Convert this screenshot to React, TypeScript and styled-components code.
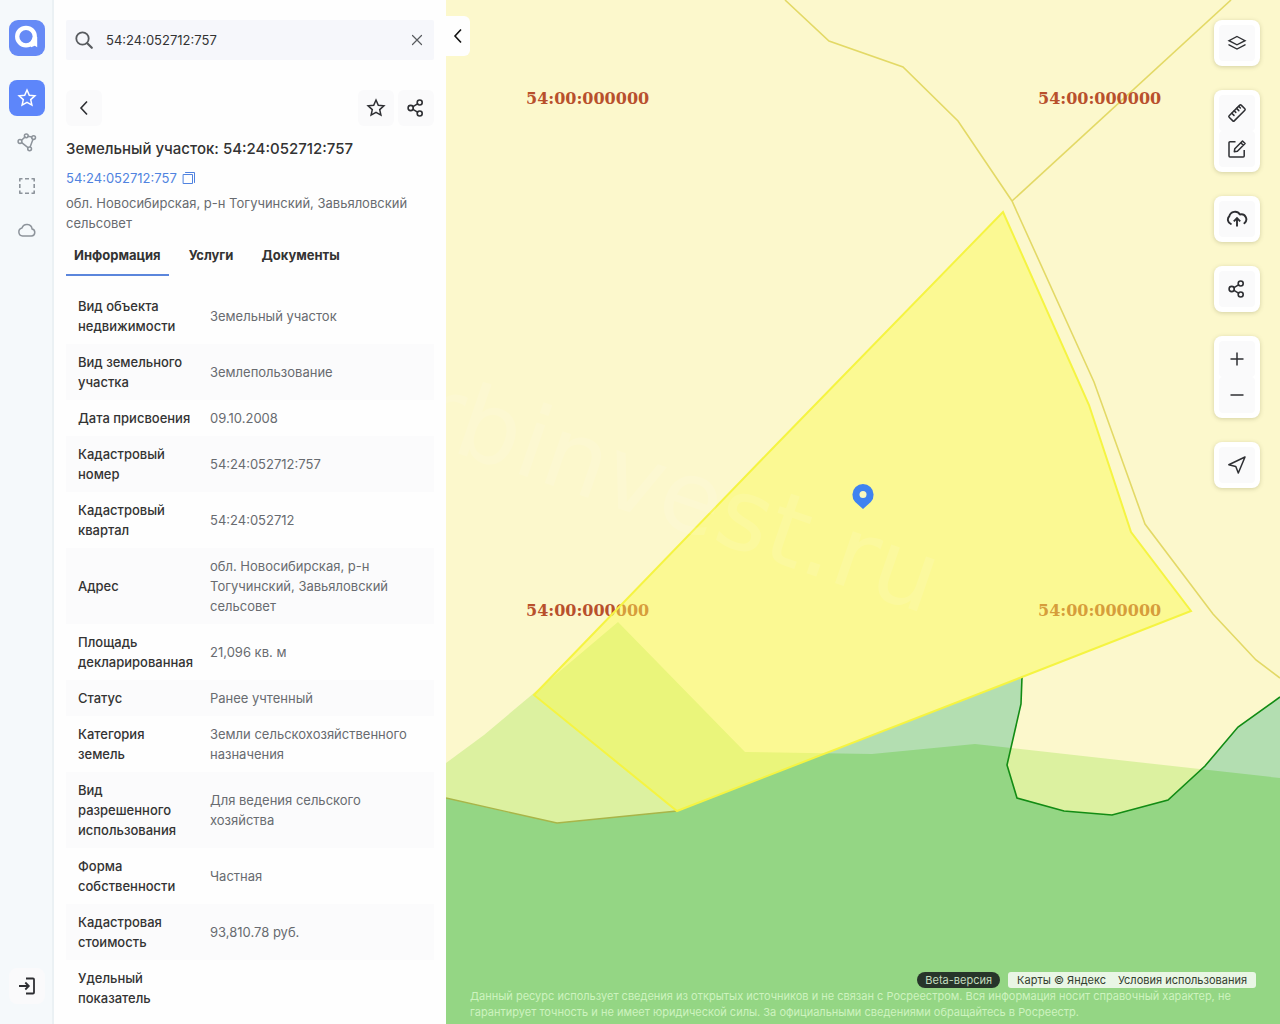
import React, { useState } from 'react';
import styled, { createGlobalStyle } from 'styled-components';

const GlobalStyle = createGlobalStyle`
  * { box-sizing: border-box; }
  body {
    margin: 0;
    background: #fefefe;
    color: #333;
    font: 400 13px/20px Inter, "Noto Sans", sans-serif;
  }
  button, input { font: inherit; color: inherit; }
`;

const Layout = styled.div`
  display: grid;
  grid-template-columns: 54px 392px minmax(0, 1fr);
  height: 100vh;
  overflow: hidden;
`;

/* ---------- Navigation rail ---------- */

const Rail = styled.nav`
  display: flex;
  flex-direction: column;
  align-items: center;
  gap: 8px;
  padding: 20px 8px;
  background: #f5f9fb;
  box-shadow: inset -2px 0 #ebf1f4;
`;

const LogoLink = styled.a`
  display: block;
  height: 36px;
  margin-bottom: 16px;
`;

const RailButton = styled.button<{ $active?: boolean; $raised?: boolean }>`
  display: grid;
  place-items: center;
  width: 36px;
  height: 36px;
  padding: 0;
  border: 0;
  border-radius: 8px;
  cursor: pointer;
  margin-top: ${p => (p.$raised ? 'auto' : '0')};
  color: ${p => (p.$active ? '#fff' : p.$raised ? '#2e2f33' : '#8d949b')};
  background: ${p => (p.$active ? '#5d86fa' : p.$raised ? '#fafafb' : 'transparent')};
`;

/* ---------- Object panel ---------- */

const Panel = styled.main`
  min-height: 0;
  padding: 20px 12px 0;
  overflow-y: auto;
  scrollbar-width: none;
  background: #fefefe;
`;

const SearchBox = styled.form`
  display: flex;
  align-items: center;
  gap: 12px;
  height: 40px;
  padding: 0 8px;
  border-radius: 2px;
  background: #f6f7fb;
  color: #585b5f;
`;

const SearchInput = styled.input`
  flex: 1;
  min-width: 0;
  padding: 0;
  border: 0;
  outline: 0;
  background: transparent;
  color: #333;
`;

const PlainButton = styled.button`
  display: grid;
  place-items: center;
  padding: 0;
  border: 0;
  background: transparent;
  cursor: pointer;
`;

const Actions = styled.div`
  display: flex;
  gap: 4px;
  margin: 30px 0 11px;
`;

const SquareButton = styled.button<{ $push?: boolean }>`
  display: grid;
  place-items: center;
  width: 36px;
  height: 36px;
  padding: 0;
  border: 0;
  border-radius: 6px;
  background: #fafafb;
  color: #2e2f33;
  cursor: pointer;
  margin-right: ${p => (p.$push ? 'auto' : '0')};
`;

const Title = styled.h1`
  margin: 0;
  font-size: 15px;
  font-weight: 500;
  line-height: 24px;
`;

const NumberLine = styled.div`
  display: flex;
  align-items: center;
  gap: 5px;
  margin: 7px 0 5px;
  color: #5083e0;
`;

const NumberLink = styled.a`
  color: inherit;
  text-decoration: none;
`;

const Address = styled.p`
  margin: 0;
  color: #686b70;
`;

const Tabs = styled.div`
  display: flex;
  gap: 12px;
  margin: 12px 0;
`;

const Tab = styled.button<{ $active: boolean }>`
  padding: 0 8px 9px;
  border: 0;
  border-bottom: 2px solid ${p => (p.$active ? '#5b86dc' : 'transparent')};
  background: transparent;
  font-weight: 700;
  cursor: pointer;
`;

const Facts = styled.table`
  width: 100%;
  border-collapse: collapse;
  table-layout: fixed;
`;

const FactRow = styled.tr`
  &:nth-child(even) { background: #fbfbfc; }
`;

const FactName = styled.th`
  width: 132px;
  padding: 8px 4px 8px 12px;
  font-weight: 500;
  text-align: left;
`;

const FactValue = styled.td`
  padding: 8px 16px 8px 12px;
  color: #686b70;
`;

/* ---------- Map ---------- */

const MapArea = styled.section`
  position: relative;
  overflow: hidden;
  background: #fcf8cc;
`;

const MapDrawing = styled.svg`
  position: absolute;
  inset: 0;
  width: 100%;
  height: 100%;
`;

const CollapseButton = styled.button`
  position: absolute;
  top: 16px;
  left: 0;
  display: grid;
  place-items: center;
  width: 24px;
  height: 40px;
  padding: 0;
  border: 0;
  border-radius: 0 6px 6px 0;
  background: #fefefe;
  color: #111;
  cursor: pointer;
`;

const Tools = styled.div`
  position: absolute;
  top: 20px;
  right: 20px;
  display: flex;
  flex-direction: column;
  gap: 24px;
`;

const ToolGroup = styled.div`
  padding: 5px;
  border-radius: 8px;
  background: #fff;
  box-shadow: 0 1px 4px rgba(90, 90, 40, 0.25);
`;

const ToolButton = styled(SquareButton)`
  border-radius: 4px;
`;

const MapFooter = styled.footer`
  position: absolute;
  left: 24px;
  right: 24px;
  bottom: 4px;
  font-size: 11px;
  line-height: 16px;
`;

const Badges = styled.div`
  display: flex;
  justify-content: flex-end;
  gap: 8px;
`;

const BetaBadge = styled.span`
  padding: 0 8px;
  border-radius: 8px;
  background: #27352a;
  color: #c3dcbf;
`;

const Credits = styled.div`
  display: flex;
  gap: 12px;
  padding: 0 9px;
  border-radius: 3px;
  background: #e9f6e5;
`;

const CreditLink = styled.a`
  color: #33402f;
  text-decoration: none;
`;

const Disclaimer = styled.p`
  margin: 0;
  color: #cdf3bf;
`;

/* ---------- Icons ---------- */

type IconProps = { size?: number; weight?: number; box?: number; children: React.ReactNode };

const Icon = ({ size = 20, weight = 1.5, box = 20, children }: IconProps) => (
  <svg width={size} height={size} viewBox={`0 0 ${box} ${box}`} fill="none" stroke="currentColor"
    strokeWidth={weight} strokeLinecap="round" strokeLinejoin="round" aria-hidden="true">
    {children}
  </svg>
);

const Logo = () => (
  <svg width="36" height="36" viewBox="0 0 36 36" aria-hidden="true">
    <rect width="36" height="36" rx="9" fill="#668af6" />
    <circle cx="17" cy="16.6" r="8.8" fill="none" stroke="#fff" strokeWidth="4.3" />
    <path d="M24 17h4.2v10.2l-2.4-1.4-3.6 1.4-1.8-3z" fill="#fff" />
  </svg>
);

const StarIcon = () => (
  <Icon weight={1.5}>
    <path d="M10 2l2.3 5.200 5.600.6-4.200 3.800 1.200 5.500L10 14.300l-4.900 2.800 1.200-5.500L2.100 7.800l5.600-.6z" strokeLinejoin="miter" />
  </Icon>
);

const ShareIcon = () => (
  <Icon weight={1.6}>
    <circle cx="4.7" cy="10" r="2.6" />
    <circle cx="13.7" cy="4.5" r="2.5" />
    <circle cx="13.7" cy="15.5" r="2.5" />
    <path d="M7 8.700l4.500-2.900M7 11.300l4.500 2.900" />
  </Icon>
);

const ChevronLeft = () => (
  <Icon size={16} box={16} weight={1.6}>
    <path d="M11 1.500L5 8l6 6.500" strokeLinecap="butt" strokeLinejoin="miter" />
  </Icon>
);

const SearchIcon = () => (
  <Icon weight={1.8}>
    <circle cx="8.5" cy="8.5" r="6.2" />
    <path d="M13.500 13.500l4.300 4.300" strokeWidth="2.2" />
  </Icon>
);

const CloseIcon = () => (
  <Icon size={18} box={18} weight={1.2}><path d="M4.500 4.500l9 9M13.500 4.500l-9 9" /></Icon>
);

const CopyIcon = () => (
  <Icon size={14} box={14} weight={1}>
    <path d="M1.500 3.500h9v9h-9zM3.500 1.500h9v10" strokeLinejoin="miter" />
  </Icon>
);

const NodesIcon = () => (
  <Icon weight={1.5}>
    <circle cx="3" cy="9.5" r="1.9" />
    <circle cx="9.3" cy="3.8" r="1.9" />
    <circle cx="16.6" cy="5.6" r="1.9" />
    <circle cx="12.6" cy="16.8" r="1.9" />
    <path d="M4.500 8.200l3.400-3.100M11.200 4.300l3.500.8M15.900 7.500l-2.700 7.300M4.700 10.600l6.300 5" />
  </Icon>
);

const SelectionIcon = () => (
  <Icon weight={1.6}>
    <path d="M2.800 5.500v-2.700h2.700M8 2.800h4M14.500 2.800h2.700v2.700M17.200 8v4M17.200 14.500v2.700h-2.700M12 17.200h-4M5.500 17.200h-2.700v-2.700M2.800 12v-4"
      strokeLinecap="butt" />
  </Icon>
);

const CloudIcon = () => (
  <Icon weight={1.5}>
    <path d="M5.600 16h8.800a3.500 3.500 0 0 0 .7-6.900A5.200 5.200 0 0 0 5 8.100a4 4 0 0 0 .6 7.900z" />
  </Icon>
);

const LoginIcon = () => (
  <Icon weight={1.8}>
    <path d="M2 10h9.500M8.300 6.500l3.500 3.500-3.500 3.500" strokeLinecap="butt" strokeLinejoin="miter" />
    <path d="M9 2.500h7a1 1 0 0 1 1 1v13a1 1 0 0 1-1 1H9" strokeLinecap="butt" />
  </Icon>
);

const LayersIcon = () => (
  <Icon weight={1.4}>
    <path d="M10 3.500l8 4.200-8 4.100-8-4.100zM2 11.800l8 4.200 8-4.200" strokeLinejoin="miter" />
  </Icon>
);

const RulerIcon = () => (
  <Icon weight={1.5}>
    <rect x="1.5" y="6.4" width="17" height="7.2" rx="1" transform="rotate(-45 10 10)" />
    <path d="M4.800 10.200l2.200 2.200M7.200 7.800l1.600 1.600M9.600 5.400l2.200 2.200M12 3.600l1.400 1.400" />
  </Icon>
);

const EditIcon = () => (
  <Icon weight={1.5}>
    <path d="M8.500 2.800H3a1 1 0 0 0-1 1V17a1 1 0 0 0 1 1h13.200a1 1 0 0 0 1-1v-6" strokeLinecap="butt" />
    <path d="M7.300 12.700l.5-3L15.500 2l2.600 2.500-7.700 7.700zM13.800 3.800l2.500 2.500" />
  </Icon>
);

const UploadIcon = () => (
  <Icon size={22} box={22} weight={1.9}>
    <path d="M4.800 15.900A4.600 4.600 0 0 1 3.300 8.300 5.800 5.800 0 0 1 13.900 6.500a5 5 0 0 1 4.500 8.700" />
    <path d="M11 18.500v-8M7.800 13.300l3.200-3.200 3.200 3.200" strokeLinecap="butt" strokeLinejoin="miter" />
  </Icon>
);

const LocateIcon = () => (
  <Icon weight={1.5}><path d="M18 2L1.800 9.700l7 1.700L11.300 18z" /></Icon>
);

const PlusIcon = () => <Icon><path d="M10 3.500v13M3.500 10h13" strokeLinecap="butt" /></Icon>;
const MinusIcon = () => <Icon><path d="M3.500 10h13" strokeLinecap="butt" /></Icon>;

/* ---------- Data ---------- */

const facts: [string, string][] = [
  ['Вид объекта недвижимости', 'Земельный участок'],
  ['Вид земельного участка', 'Землепользование'],
  ['Дата присвоения', '09.10.2008'],
  ['Кадастровый номер', '54:24:052712:757'],
  ['Кадастровый квартал', '54:24:052712'],
  ['Адрес', 'обл. Новосибирская, р-н Тогучинский, Завьяловский сельсовет'],
  ['Площадь декларированная', '21,096 кв. м'],
  ['Статус', 'Ранее учтенный'],
  ['Категория земель', 'Земли сельскохозяйственного назначения'],
  ['Вид разрешенного использования', 'Для ведения сельского хозяйства'],
  ['Форма собственности', 'Частная'],
  ['Кадастровая стоимость', '93,810.78 руб.'],
  ['Удельный показатель', ''],
];

const tabNames = ['Информация', 'Услуги', 'Документы'];

const woods = '446,763 484,735 534,693 618,622 745,752 872,754 975,744 1280,778 1280,1024 446,1024';
const parcel = '1003,212 1089,405 1131,532 1191,611 1022,677 677,811 534,695 772,449';
const fieldEdge = '446,798 557,823 677,811';
const glade = '1022,677 1021,704 1007,765 1017,798 1064,811 1112,815 1168,800 1205,766 1238,727 1280,697';
const forestZone = `${fieldEdge} ${glade} 1280,1024 446,1024`;
const quarterLabels = [[526, 104], [1038, 104], [526, 616], [1038, 616]];

const CadastralMap = () => (
  <MapDrawing viewBox="446 0 834 1024" preserveAspectRatio="xMidYMid slice" role="img" aria-label="Кадастровая карта">
    <defs><clipPath id="woods"><polygon points={woods} /></clipPath></defs>
    <polygon points={woods} fill="#dcf1a0" />
    <polygon points={forestZone} fill="#b3deb1" />
    <polygon points={forestZone} fill="#94d684" clipPath="url(#woods)" />
    <g fill="none" stroke="#e3d966" strokeWidth="1.6">
      <path d="M785 0L829 41L903 67L958 121L1012 201L1094 382L1145 524L1213 614L1256 660L1280 678" />
      <path d="M1231 0L1012 201" />
    </g>
    <polyline points={fieldEdge} fill="none" stroke="#a9b548" strokeWidth="1.3" />
    <polyline points={glade} fill="none" stroke="#128c14" strokeWidth="1.6" />
    <g fill="#b8502c" fontFamily='"DejaVu Serif", serif' fontWeight="700" fontSize="16">
      {quarterLabels.map(([x, y]) => <text key={`${x}-${y}`} x={x} y={y}>54:00:000000</text>)}
    </g>
    <polygon points={parcel} fill="#fbfa4d" fillOpacity="0.45" />
    <polygon points={parcel} fill="none" stroke="#f5f442" strokeWidth="2" />
    <text transform="translate(411 437) rotate(19)" fill="#fff" fillOpacity="0.11"
      fontFamily='"DejaVu Sans", sans-serif' fontSize="100">rbinvest.ru</text>
    <path fill="#3f83f0" d="M863 509l-7.800-7.100A10.600 10.600 0 1 1 870.800 501.900z" />
    <circle cx="863" cy="494.6" r="3.5" fill="#fbfac0" />
  </MapDrawing>
);

export default function App() {
  const [query, setQuery] = useState('54:24:052712:757');
  const [tab, setTab] = useState(0);

  return (
    <Layout>
      <GlobalStyle />
      <Rail>
        <LogoLink href="#" aria-label="На главную"><Logo /></LogoLink>
        <RailButton $active aria-label="Избранное"><StarIcon /></RailButton>
        <RailButton aria-label="Связи"><NodesIcon /></RailButton>
        <RailButton aria-label="Выделение"><SelectionIcon /></RailButton>
        <RailButton aria-label="Облако"><CloudIcon /></RailButton>
        <RailButton $raised aria-label="Войти"><LoginIcon /></RailButton>
      </Rail>

      <Panel>
        <SearchBox role="search" onSubmit={e => e.preventDefault()}>
          <SearchIcon />
          <SearchInput aria-label="Поиск" value={query} onChange={e => setQuery(e.target.value)} />
          <PlainButton type="button" aria-label="Очистить" onClick={() => setQuery('')}><CloseIcon /></PlainButton>
        </SearchBox>

        <Actions>
          <SquareButton $push aria-label="Назад"><ChevronLeft /></SquareButton>
          <SquareButton aria-label="В избранное"><StarIcon /></SquareButton>
          <SquareButton aria-label="Поделиться"><ShareIcon /></SquareButton>
        </Actions>

        <Title>Земельный участок: 54:24:052712:757</Title>
        <NumberLine>
          <NumberLink href="#">54:24:052712:757</NumberLink>
          <PlainButton aria-label="Скопировать"><CopyIcon /></PlainButton>
        </NumberLine>
        <Address>обл. Новосибирская, р-н Тогучинский, Завьяловский сельсовет</Address>

        <Tabs role="tablist">
          {tabNames.map((name, i) => (
            <Tab key={name} role="tab" aria-selected={i === tab} $active={i === tab} onClick={() => setTab(i)}>{name}</Tab>
          ))}
        </Tabs>

        <Facts>
          <tbody>
            {facts.map(([name, value]) => (
              <FactRow key={name}>
                <FactName scope="row">{name}</FactName>
                <FactValue>{value}</FactValue>
              </FactRow>
            ))}
          </tbody>
        </Facts>
      </Panel>

      <MapArea>
        <CadastralMap />
        <CollapseButton aria-label="Свернуть панель"><ChevronLeft /></CollapseButton>
        <Tools>
          <ToolGroup><ToolButton aria-label="Слои"><LayersIcon /></ToolButton></ToolGroup>
          <ToolGroup>
            <ToolButton aria-label="Измерить"><RulerIcon /></ToolButton>
            <ToolButton aria-label="Рисовать"><EditIcon /></ToolButton>
          </ToolGroup>
          <ToolGroup><ToolButton aria-label="Загрузить"><UploadIcon /></ToolButton></ToolGroup>
          <ToolGroup><ToolButton aria-label="Поделиться картой"><ShareIcon /></ToolButton></ToolGroup>
          <ToolGroup>
            <ToolButton aria-label="Приблизить"><PlusIcon /></ToolButton>
            <ToolButton aria-label="Отдалить"><MinusIcon /></ToolButton>
          </ToolGroup>
          <ToolGroup><ToolButton aria-label="Моё местоположение"><LocateIcon /></ToolButton></ToolGroup>
        </Tools>
        <MapFooter>
          <Badges>
            <BetaBadge>Beta-версия</BetaBadge>
            <Credits>
              <CreditLink href="#">Карты © Яндекс</CreditLink>
              <CreditLink href="#">Условия использования</CreditLink>
            </Credits>
          </Badges>
          <Disclaimer>
            Данный ресурс использует сведения из открытых источников и не связан с Росреестром. Вся информация носит
            справочный характер, не гарантирует точность и не имеет юридической силы. За официальными сведениями
            обращайтесь в Росреестр.
          </Disclaimer>
        </MapFooter>
      </MapArea>
    </Layout>
  );
}
